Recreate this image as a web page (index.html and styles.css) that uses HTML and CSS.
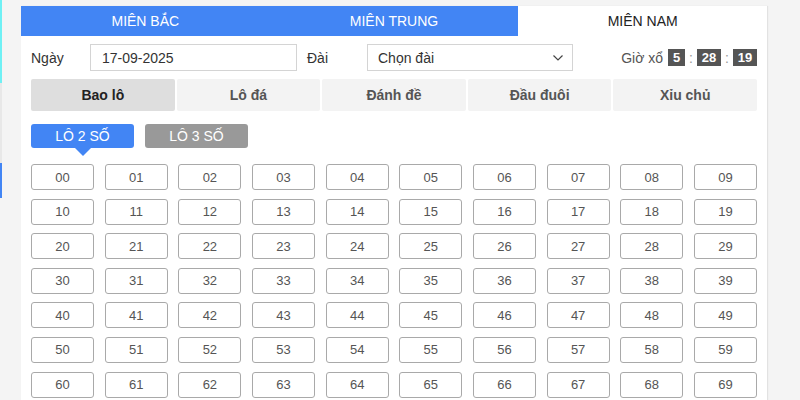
FILE: index.html
```html
<!DOCTYPE html>
<html lang="vi">
<head>
<meta charset="utf-8">
<link rel="stylesheet" href="styles.css">
</head>
<body>
<div class="page">
  <div class="edge">
    <div class="edge-cyan"></div>
    <div class="edge-gap"></div>
    <div class="edge-blue"></div>
  </div>
  <div class="panel">
    <div class="regions">
      <div class="region">MIÊN BẮC</div>
      <div class="region">MIÊN TRUNG</div>
      <div class="region active">MIÊN NAM</div>
    </div>
    <div class="body">
      <div class="form-row">
        <span class="label label-date">Ngày</span>
        <div class="input">17-09-2025</div>
        <span class="label label-station">Đài</span>
        <div class="select">
          <span>Chọn đài</span>
          <svg class="chev" width="12" height="8" viewBox="0 0 12 8"><path d="M1.5 1.5 L6 6 L10.5 1.5" fill="none" stroke="#444" stroke-width="1.2"/></svg>
        </div>
        <div class="timer">
          <span class="timer-label">Giờ xổ</span>
          <span class="tbox narrow">5</span>
          <span class="colon">:</span>
          <span class="tbox">28</span>
          <span class="colon">:</span>
          <span class="tbox">19</span>
        </div>
      </div>
      <div class="types">
        <div class="type active">Bao lô</div>
        <div class="type">Lô đá</div>
        <div class="type">Đánh đề</div>
        <div class="type">Đầu đuôi</div>
        <div class="type">Xỉu chủ</div>
      </div>
      <div class="modes">
        <div class="mode active">LÔ 2 SỐ</div>
        <div class="mode">LÔ 3 SỐ</div>
      </div>
      <div class="grid">
        <div class="cell">00</div><div class="cell">01</div><div class="cell">02</div><div class="cell">03</div><div class="cell">04</div><div class="cell">05</div><div class="cell">06</div><div class="cell">07</div><div class="cell">08</div><div class="cell">09</div>
        <div class="cell">10</div><div class="cell">11</div><div class="cell">12</div><div class="cell">13</div><div class="cell">14</div><div class="cell">15</div><div class="cell">16</div><div class="cell">17</div><div class="cell">18</div><div class="cell">19</div>
        <div class="cell">20</div><div class="cell">21</div><div class="cell">22</div><div class="cell">23</div><div class="cell">24</div><div class="cell">25</div><div class="cell">26</div><div class="cell">27</div><div class="cell">28</div><div class="cell">29</div>
        <div class="cell">30</div><div class="cell">31</div><div class="cell">32</div><div class="cell">33</div><div class="cell">34</div><div class="cell">35</div><div class="cell">36</div><div class="cell">37</div><div class="cell">38</div><div class="cell">39</div>
        <div class="cell">40</div><div class="cell">41</div><div class="cell">42</div><div class="cell">43</div><div class="cell">44</div><div class="cell">45</div><div class="cell">46</div><div class="cell">47</div><div class="cell">48</div><div class="cell">49</div>
        <div class="cell">50</div><div class="cell">51</div><div class="cell">52</div><div class="cell">53</div><div class="cell">54</div><div class="cell">55</div><div class="cell">56</div><div class="cell">57</div><div class="cell">58</div><div class="cell">59</div>
        <div class="cell">60</div><div class="cell">61</div><div class="cell">62</div><div class="cell">63</div><div class="cell">64</div><div class="cell">65</div><div class="cell">66</div><div class="cell">67</div><div class="cell">68</div><div class="cell">69</div>
      </div>
    </div>
  </div>
</div>
</body>
</html>
```
FILE: styles.css
```css
* { box-sizing: border-box; }
html, body { margin: 0; padding: 0; }
body {
  width: 800px;
  height: 400px;
  overflow: hidden;
  background: #f4f4f4;
  font-family: "Liberation Sans", Arial, sans-serif;
  font-size: 14px;
  color: #333;
}
.page {
  display: flex;
  height: 400px;
}
.edge {
  width: 2px;
  display: flex;
  flex-direction: column;
}
.edge-cyan { height: 83px; background: #6ff0f4; }
.edge-gap { height: 80px; background: #e8e8e8; }
.edge-blue { height: 35px; background: #4285f4; }
.panel {
  margin: 6px 0 0 19px;
  width: 746px;
  height: 400px;
  background: #fff;
  box-shadow: 1px 0 1px #e2e2e2;
}
.regions {
  display: grid;
  grid-template-columns: repeat(3, 1fr);
  height: 30px;
}
.region {
  background: #4285f4;
  color: #fff;
  display: flex;
  align-items: center;
  justify-content: center;
  font-size: 14px;
}
.region.active {
  background: #fff;
  color: #222;
}
.body {
  padding: 8px 10px 0 10px;
}
.form-row {
  display: flex;
  align-items: center;
  height: 27px;
}
.label { color: #333; font-size: 14px; }
.label-date { width: 59px; }
.input {
  width: 207px;
  height: 27px;
  border: 1px solid #d4d4d4;
  display: flex;
  align-items: center;
  padding-left: 11px;
  color: #333;
}
.label-station { margin-left: 10px; width: 60px; }
.select {
  width: 206px;
  height: 27px;
  border: 1px solid #d4d4d4;
  display: flex;
  align-items: center;
  justify-content: space-between;
  padding: 0 8px 0 10px;
  color: #333;
}
.chev { display: block; }
.timer {
  margin-left: auto;
  display: flex;
  align-items: center;
}
.timer-label { color: #555; margin-right: 5px; }
.tbox {
  background: #555;
  color: #fff;
  font-weight: bold;
  height: 17px;
  width: 24px;
  display: flex;
  align-items: center;
  justify-content: center;
  font-size: 13px;
}
.tbox.narrow { width: 17px; }
.colon { color: #999; width: 12px; text-align: center; }
.types {
  margin-top: 8px;
  display: grid;
  grid-template-columns: repeat(5, 1fr);
  column-gap: 2px;
  height: 32px;
}
.type {
  background: #f3f3f3;
  color: #555;
  font-weight: bold;
  display: flex;
  align-items: center;
  justify-content: center;
  font-size: 14px;
  border-radius: 2px;
}
.type.active {
  background: #dedede;
  color: #222;
}
.modes {
  margin-top: 13px;
  display: flex;
  gap: 11px;
}
.mode {
  position: relative;
  width: 103px;
  height: 24px;
  border-radius: 3px;
  background: #999;
  color: #fff;
  display: flex;
  align-items: center;
  justify-content: center;
  font-size: 14px;
}
.mode.active { background: #4285f4; }
.mode.active::after {
  content: "";
  position: absolute;
  left: 50%;
  bottom: -8px;
  margin-left: -8px;
  border-left: 8px solid transparent;
  border-right: 8px solid transparent;
  border-top: 8px solid #4285f4;
}
.grid {
  margin-top: 16px;
  display: grid;
  grid-template-columns: repeat(10, 1fr);
  column-gap: 10.5px;
  row-gap: 8.6px;
}
.cell {
  height: 26px;
  border: 1px solid #a9a9a9;
  border-radius: 3px;
  display: flex;
  align-items: center;
  justify-content: center;
  color: #555;
  font-size: 13px;
}
```
